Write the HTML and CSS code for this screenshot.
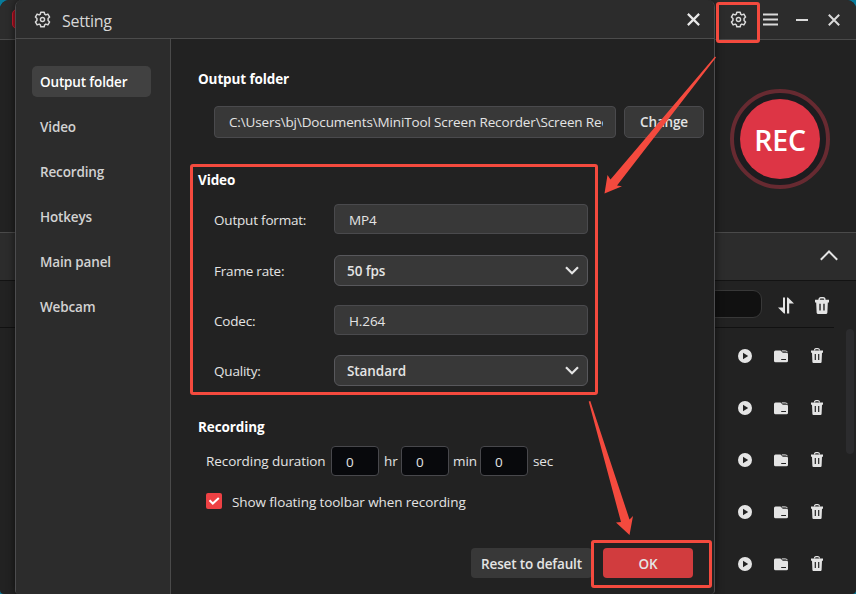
FILE: index.html
```html
<!DOCTYPE html>
<html lang="en">
<head>
    <meta charset="UTF-8">
    <meta name="viewport" content="width=device-width, initial-scale=1.0">
    <title>Setting</title>
    <link rel="stylesheet" href="styles.css">
</head>
<body>
    <!-- shared icons -->
    <svg class="icon-defs" width="0" height="0">
        <symbol id="gear" viewBox="0 0 18 18">
            <path d="M7.2 1.2h3.6l.5 2.2 1.2.7 2.2-.8 1.8 3.1-1.6 1.5v2.2l1.6 1.5-1.8 3.1-2.2-.8-1.2.7-.5 2.2H7.2l-.5-2.2-1.2-.7-2.2.8-1.8-3.1 1.6-1.5V7.9L1.5 6.4l1.8-3.1 2.2.8 1.2-.7z" fill="none" stroke="currentColor" stroke-width="1.6" stroke-linejoin="round"/>
            <circle cx="9" cy="9" r="2.2" fill="none" stroke="currentColor" stroke-width="1.5"/>
        </symbol>
        <symbol id="play" viewBox="0 0 14 14">
            <path fill-rule="evenodd" d="M7 0a7 7 0 1 1 0 14A7 7 0 0 1 7 0zM5 3.8v6.4L10.2 7z" fill="currentColor"/>
        </symbol>
        <symbol id="folder" viewBox="0 0 14 13">
            <path d="M0 2Q0 .5 1.5.5h4.500Q7 .5 7.500 1.500T9 2.800h3.600Q14 2.800 14 4.200v6.500q0 1.500-1.500 1.500h-11Q0 12.200 0 10.700z" fill="currentColor"/>
            <path d="M7.800.9h3.400q1.800 0 2.300 1.300" fill="none" stroke="currentColor" stroke-width="1"/>
            <path d="M7.200 9.500h4.800" stroke="#222" stroke-width="1"/>
        </symbol>
        <symbol id="trash" viewBox="0 0 12 15">
            <path d="M3.500 2.600Q3.500.7 5 .7h2q1.500 0 1.500 1.900" fill="none" stroke="currentColor" stroke-width="1.200"/>
            <path fill-rule="evenodd" d="M0 2.500h12v2.300h-1L10.600 14q-.1 1-1 1H2.400q-.9 0-1-1L1 4.800H0zM3.700 6v6h1.200V6zM7.100 6v6h1.200V6z" fill="currentColor"/>
        </symbol>
        <symbol id="cross" viewBox="0 0 12 12">
            <path d="M.8.8l10.400 10.400M11.200.8L.8 11.200" stroke="currentColor" stroke-width="2"/>
        </symbol>
    </svg>

    <div class="app">
        <div class="titlebar">
            <span class="logo"></span>
            <div class="window-buttons">
                <svg width="17" height="17"><use href="#gear"/></svg>
                <svg width="15" height="13" viewBox="0 0 15 13"><path d="M0 1.500h15M0 6.500h15M0 11.500h15" stroke="currentColor" stroke-width="1.800"/></svg>
                <svg width="12" height="12" viewBox="0 0 12 12"><path d="M0 6h12" stroke="currentColor" stroke-width="2"/></svg>
                <svg width="12" height="12"><use href="#cross"/></svg>
            </div>
        </div>
        <div class="capture">
            <div class="rec-ring"><div class="rec">REC</div></div>
        </div>
        <div class="tabs">
            <svg width="18" height="11" viewBox="0 0 18 11"><path d="M.8 9.800L9 1.500l8.200 8.300" fill="none" stroke="currentColor" stroke-width="2"/></svg>
        </div>
        <div class="list-tools">
            <div class="search"></div>
            <svg class="sort" width="17" height="17" viewBox="0 0 17 17"><path d="M5 .5h2v16H6L0 10.500h5zM9 .5h1l6 6h-4.800v10H9z" fill="currentColor"/></svg>
            <svg width="14" height="17" viewBox="0 0 12 15" preserveAspectRatio="none"><use href="#trash"/></svg>
        </div>
        <div class="files">
            <div class="rows">
                <div class="file-row"><svg width="14" height="14"><use href="#play"/></svg><svg width="14" height="13"><use href="#folder"/></svg><svg width="12" height="15"><use href="#trash"/></svg></div>
                <div class="file-row"><svg width="14" height="14"><use href="#play"/></svg><svg width="14" height="13"><use href="#folder"/></svg><svg width="12" height="15"><use href="#trash"/></svg></div>
                <div class="file-row"><svg width="14" height="14"><use href="#play"/></svg><svg width="14" height="13"><use href="#folder"/></svg><svg width="12" height="15"><use href="#trash"/></svg></div>
                <div class="file-row"><svg width="14" height="14"><use href="#play"/></svg><svg width="14" height="13"><use href="#folder"/></svg><svg width="12" height="15"><use href="#trash"/></svg></div>
                <div class="file-row"><svg width="14" height="14"><use href="#play"/></svg><svg width="14" height="13"><use href="#folder"/></svg><svg width="12" height="15"><use href="#trash"/></svg></div>
            </div>
            <div class="scrollbar"></div>
        </div>
    </div>

    <div class="dialog">
        <div class="dialog-header">
            <svg width="17" height="17"><use href="#gear"/></svg>
            <span class="dialog-title">Setting</span>
            <svg class="close" width="13" height="13"><use href="#cross"/></svg>
        </div>
        <div class="dialog-body">
            <div class="sidebar">
                <div class="nav-item active">Output folder</div>
                <div class="nav-item">Video</div>
                <div class="nav-item">Recording</div>
                <div class="nav-item">Hotkeys</div>
                <div class="nav-item">Main panel</div>
                <div class="nav-item">Webcam</div>
            </div>
            <div class="content">
                <h2>Output folder</h2>
                <div class="path-row">
                    <div class="path"><span>C:\Users\bj\Documents\MiniTool Screen Recorder\Screen Rec</span></div>
                    <div class="btn change">Change</div>
                </div>

                <h2>Video</h2>
                <div class="fields">
                    <label>Output format:</label>
                    <div class="field">MP4</div>
                    <label>Frame rate:</label>
                    <div class="field select">50 fps<svg width="14" height="9" viewBox="0 0 14 9"><path d="M1 1.300l6 6 6-6" fill="none" stroke="currentColor" stroke-width="2.200"/></svg></div>
                    <label>Codec:</label>
                    <div class="field">H.264</div>
                    <label>Quality:</label>
                    <div class="field select">Standard<svg width="14" height="9" viewBox="0 0 14 9"><path d="M1 1.300l6 6 6-6" fill="none" stroke="currentColor" stroke-width="2.200"/></svg></div>
                </div>

                <h2>Recording</h2>
                <div class="duration">
                    <span class="duration-label">Recording duration</span>
                    <div class="num">0</div>
                    <span class="hr">hr</span>
                    <div class="num">0</div>
                    <span class="min">min</span>
                    <div class="num">0</div>
                    <span class="sec">sec</span>
                </div>
                <div class="check-row">
                    <span class="checkbox"><svg width="16" height="16" viewBox="0 0 16 16"><path d="M3.500 7.200l3.300 3.300 6-5.500" fill="none" stroke="#fff" stroke-width="2"/></svg></span>
                    <span>Show floating toolbar when recording</span>
                </div>

                <div class="footer">
                    <div class="btn reset">Reset to default</div>
                    <div class="btn ok">OK</div>
                </div>
            </div>
        </div>
    </div>

    <!-- red highlight boxes and arrows -->
    <svg class="marks" width="856" height="594" viewBox="0 0 856 594">
        <g fill="none" stroke="#f44a3e" stroke-width="3">
            <rect x="717.500" y="3.500" width="41" height="38" rx="1.500"/>
            <rect x="191.500" y="165.500" width="405" height="228" rx="1.500"/>
            <rect x="592.500" y="541.500" width="118" height="45" rx="1.500"/>
        </g>
        <g fill="#f44a3e">
            <path d="M715 56.500l1 1-99 128 5 .800-17.500 7.200 3-18.500 3 4.500z"/>
            <path d="M588.700 401.500l1.600-.5 39.200 118.500 3.500-3.500-3.500 19-13.500-12.500 5-.5z"/>
        </g>
    </svg>
</body>
</html>
```

FILE: styles.css
```css
* { box-sizing: border-box; }
body {
    margin: 0;
    width: 856px;
    height: 594px;
    overflow: hidden;
    position: relative;
    background: #087b9b;
    color: #e4e4e4;
    font-family: "Open Sans", "Noto Sans", sans-serif;
    font-size: 13.5px;
    letter-spacing: -0.08px;
}
svg { display: block; flex: none; }
.icon-defs { position: absolute; }

/* main window */
.app { width: 856px; height: 594px; background: #222; border-radius: 9px 9px 4px 4px; overflow: hidden; }
.titlebar { height: 40px; background: #2c2c2c; border-bottom: 1px solid #4a4a4a; display: flex; align-items: center; justify-content: space-between; padding: 0 16px 0 12px; }
.logo { width: 20px; height: 20px; margin-top: -1px; background: #a50f20; border: 1px solid #d01f30; border-radius: 5px; }
.window-buttons { display: flex; align-items: center; color: #dadada; }
.window-buttons svg:nth-child(2) { margin-left: 16px; }
.window-buttons svg:nth-child(3) { margin-left: 18px; }
.window-buttons svg:nth-child(4) { margin-left: 20px; }
.capture { height: 192px; display: flex; justify-content: flex-end; padding: 49px 26px 0 0; }
.rec-ring { width: 100px; height: 100px; border: 4px solid #672a31; border-radius: 50%; background: #1d1c1f; display: flex; align-items: center; justify-content: center; }
.rec { width: 80px; height: 80px; border-radius: 50%; background: #dd3545; color: #fff; font-size: 28.5px; font-weight: 600; letter-spacing: -0.2px; line-height: 82px; text-align: center; }
.tabs { height: 49px; background: #2c2c2c; border-top: 1px solid #4a4a4a; border-bottom: 1px solid #131313; display: flex; align-items: center; justify-content: flex-end; padding: 0 18px 2px 0; }
.list-tools { height: 47px; width: 834px; border-bottom: 1px solid #111; display: flex; align-items: center; padding: 3px 5px 0 0; color: #e4e4e4; }
.search { width: 742px; height: 28px; margin: -3px 0 0 20px; background: #111; border: 1px solid #383838; border-radius: 9px; }
.sort { margin: 0 20px 0 16px; }
.files { display: flex; }
.rows { width: 846px; padding-top: 2px; }
.file-row { height: 52px; display: flex; align-items: center; padding-left: 738px; gap: 22px; }
.file-row svg:last-child { margin: -1px 0 0 1px; }
.scrollbar { width: 8px; height: 125px; margin-top: 1px; background: #2c2c2e; border-radius: 4px; }

/* settings dialog */
.dialog { position: absolute; left: 15px; top: 0; width: 700px; height: 594px; background: #222; border: 1px solid #4c4c4e; border-top: 0; border-bottom: 0; border-radius: 7px 7px 4px 4px; box-shadow: 0 0 8px rgba(0,0,0,0.6); overflow: hidden; display: flex; flex-direction: column; }
.dialog-header { height: 39px; flex: none; background: #2c2c2c; border-bottom: 1px solid #4c4c4c; display: flex; align-items: center; padding: 0 14px 0 18px; color: #d8d8d8; }
.dialog-title { font-size: 16px; margin: 3px 0 0 11px; letter-spacing: -0.3px; }
.close { margin-left: auto; color: #e8e8e8; }
.dialog-body { flex: 1; display: flex; }
.sidebar { width: 155px; background: #2c2c2c; border-right: 1px solid #4a4a4a; padding: 27px 19px 0 16px; }
.nav-item { height: 31px; line-height: 32px; margin-bottom: 14px; padding-left: 8px; border-radius: 5px; font-weight: 600; letter-spacing: -0.15px; color: #d2d2d2; }
.nav-item.active { background: #414141; color: #fff; }
.content { flex: 1; padding: 30px 10px 0 27px; }
h2 { margin: 0; height: 20px; font-size: 13.5px; line-height: 20px; font-weight: 700; letter-spacing: -0.12px; color: #fff; }
.path-row { display: flex; gap: 8px; margin: 17px 0 32px 16px; }
.path { width: 402px; height: 32px; padding: 0 12px 0 14px; line-height: 31px; letter-spacing: -0.14px; background: #383838; border: 1px solid #4a4a4d; border-radius: 4px; }
.path span { display: block; overflow: hidden; white-space: nowrap; }
.btn { background: #383838; border-radius: 5px; font-weight: 600; letter-spacing: -0.15px; text-align: center; }
.change { width: 80px; height: 32px; line-height: 31px; border: 1px solid #4a4a4d; }
.fields { display: grid; grid-template-columns: 120px 254px; grid-template-rows: 31px 30px 30px 31px; row-gap: 20px; margin: 14px 0 31px 16px; }
.fields label { line-height: 32px; letter-spacing: -0.2px; }
.field { height: 30px; line-height: 30px; padding: 0 14px; background: #383838; border: 1px solid #4a4a4d; border-radius: 4px; }
.select { height: 31px; padding: 0 8px 0 12px; border-color: #58585c; border-radius: 6px; font-weight: 600; display: flex; align-items: center; justify-content: space-between; }
.duration { display: flex; align-items: center; margin: 9px 0 0 8px; }
.duration-label { width: 125px; }
.num { width: 48px; height: 30px; line-height: 30px; padding-left: 14px; background: #08090c; border: 1px solid #48484c; border-radius: 4px; }
.hr { width: 22px; padding-left: 5px; }
.min { width: 31px; padding-left: 4px; }
.sec { padding-left: 5px; }
.check-row { display: flex; align-items: center; gap: 10px; height: 20px; margin: 16px 0 0 8px; }
.checkbox { width: 16px; height: 16px; margin-top: -2px; background: #ee4144; border-radius: 2px; }
.footer { display: flex; margin: 36px 0 0 273px; gap: 11px; }
.footer .btn { height: 30px; line-height: 32px; border-radius: 4px; }
.reset { width: 121px; }
.ok { width: 90px; }
.footer .ok { background: #d13c3e; }

.marks { position: absolute; left: 0; top: 0; }
```
